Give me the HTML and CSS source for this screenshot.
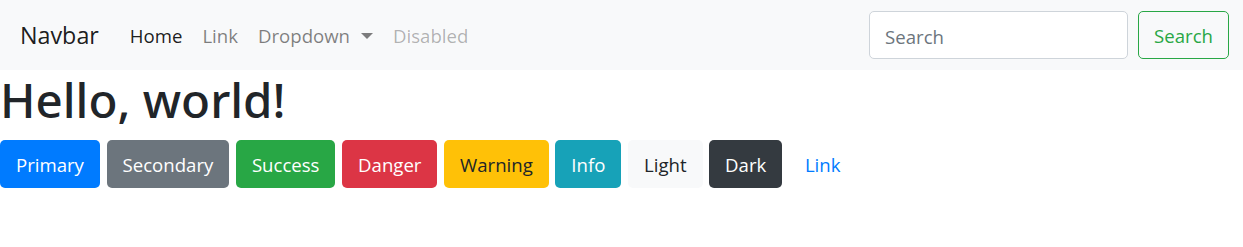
FILE: index.html
```html
<!DOCTYPE html>
<html lang="en">
<head>
<meta charset="utf-8">
<title>Hello, world!</title>
<link rel="stylesheet" href="styles.css">
</head>
<body>
<nav class="navbar">
  <a class="brand" href="#">Navbar</a>
  <ul class="nav">
    <li><a class="nav-link active" href="#">Home</a></li>
    <li><a class="nav-link" href="#">Link</a></li>
    <li><a class="nav-link" href="#">Dropdown<span class="caret"></span></a></li>
    <li><a class="nav-link disabled" href="#">Disabled</a></li>
  </ul>
  <form class="search">
    <input class="search-input" type="search" placeholder="Search">
    <button class="btn btn-outline-success" type="button">Search</button>
  </form>
</nav>
<h1 class="title">Hello, world!</h1>
<div class="buttons">
  <button class="btn btn-primary" type="button">Primary</button>
  <button class="btn btn-secondary" type="button">Secondary</button>
  <button class="btn btn-success" type="button">Success</button>
  <button class="btn btn-danger" type="button">Danger</button>
  <button class="btn btn-warning" type="button">Warning</button>
  <button class="btn btn-info" type="button">Info</button>
  <button class="btn btn-light" type="button">Light</button>
  <button class="btn btn-dark" type="button">Dark</button>
  <button class="btn btn-link" type="button">Link</button>
</div>
</body>
</html>
```
FILE: styles.css
```css
* { box-sizing: border-box; }
body {
  margin: 0;
  font-family: "Open Sans", "Noto Sans", sans-serif;
  font-size: 18.6px;
  color: #212529;
  background: #fff;
}
.navbar {
  display: flex;
  align-items: center;
  height: 70px;
  padding: 0 14px 0 20px;
  background: #f8f9fa;
}
.brand {
  font-size: 23.3px;
  line-height: 37px;
  padding-top: 1px;
  color: rgba(0,0,0,.9);
  text-decoration: none;
  margin-right: 21px;
}
.nav {
  display: flex;
  list-style: none;
  margin: 0;
  padding: 0;
  flex: 1;
}
.nav-link {
  display: flex;
  align-items: center;
  padding: 2px 10px 0;
  line-height: 30px;
  color: rgba(0,0,0,.5);
  text-decoration: none;
}
.nav-link.active { color: rgba(0,0,0,.9); }
.nav-link.disabled { color: rgba(0,0,0,.3); }
.caret {
  display: inline-block;
  width: 0;
  height: 0;
  margin-left: 11px;
  border-top: 6px solid;
  border-left: 6px solid transparent;
  border-right: 6px solid transparent;
}
.search {
  display: flex;
  gap: 10px;
  margin: 0;
}
.search-input {
  width: 259px;
  height: 47.5px;
  padding: 8.5px 15px 6.5px;
  font: inherit;
  color: #495057;
  background: #fff;
  border: 1.25px solid #ced4da;
  border-radius: 5px;
}
.search-input::placeholder { color: #6c757d; }
.btn {
  display: inline-block;
  height: 47.5px;
  padding: 8.5px 15px 6.5px;
  font: inherit;
  line-height: 30px;
  border: 1.25px solid transparent;
  border-radius: 5px;
  background: transparent;
  cursor: pointer;
}
.btn-outline-success { color: #28a745; border-color: #28a745; }
.title {
  margin: 0 0 10px;
  font-family: "Noto Sans", "Open Sans", sans-serif;
  font-size: 47.5px;
  font-weight: 500;
  line-height: 60px;
}
.buttons {
  display: flex;
  gap: 6.6px;
}
.btn-primary { background: #007bff; color: #fff; }
.btn-secondary { background: #6c757d; color: #fff; }
.btn-success { background: #28a745; color: #fff; }
.btn-danger { background: #dc3545; color: #fff; }
.btn-warning { background: #ffc107; color: #212529; }
.btn-info { background: #17a2b8; color: #fff; }
.btn-light { background: #f8f9fa; color: #212529; }
.btn-dark { background: #343a40; color: #fff; }
.btn-link { color: #007bff; }
```
